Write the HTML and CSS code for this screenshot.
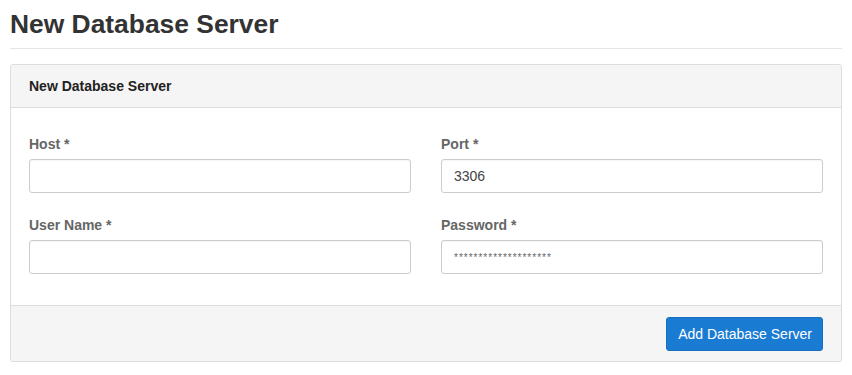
FILE: index.html
```html
<!DOCTYPE html>
<html lang="en">
<head>
    <meta charset="UTF-8">
    <meta name="viewport" content="width=device-width, initial-scale=1.0">
    <title>New Database Server</title>
    <link rel="stylesheet" href="styles.css">
</head>
<body>

<div class="page-header">
    <h1>New Database Server</h1>
</div>

<form class="panel">
    <div class="panel-heading">New Database Server</div>

    <div class="panel-body">
        <div class="form-row">
            <div class="form-group">
                <label for="host">Host *</label>
                <input class="form-control" type="text" id="host" />
            </div>
            <div class="form-group">
                <label for="port">Port *</label>
                <input class="form-control" type="text" id="port" value="3306" />
            </div>
        </div>
        <div class="form-row">
            <div class="form-group">
                <label for="username">User Name *</label>
                <input class="form-control" type="text" id="username" />
            </div>
            <div class="form-group">
                <label for="password">Password *</label>
                <!-- masked value shown as asterisks -->
                <input class="form-control masked" type="text" id="password" value="********************" />
            </div>
        </div>
    </div>

    <div class="panel-footer">
        <button class="btn-primary" type="button">Add Database Server</button>
    </div>
</form>

</body>
</html>
```

FILE: styles.css
```css
* {
    box-sizing: border-box;
}
body {
    margin: 0;
    padding: 0 10px;
    font-family: "Liberation Sans", Arial, sans-serif;
    font-size: 14px;
    color: #333;
    background: #fff;
}
.page-header {
    border-bottom: 1px solid #e5e5e5;
    padding-top: 7px;
    height: 49px;
}
h1 {
    margin: 0;
    font-size: 26.4px;
    line-height: 34px;
    font-weight: bold;
    color: #333;
}
.panel {
    margin-top: 15px;
    border: 1px solid #ddd;
    border-radius: 3px;
    background: #fff;
    box-shadow: 0 1px 1px rgba(0, 0, 0, 0.03);
}
.panel-heading {
    background: #f5f5f5;
    border-bottom: 1px solid #ddd;
    border-radius: 3px 3px 0 0;
    height: 43px;
    padding: 0 18px;
    line-height: 42px;
    font-size: 14px;
    font-weight: bold;
    color: #222;
}
.panel-body {
    padding: 26px 18px 31px 18px;
}
.form-row {
    display: grid;
    grid-template-columns: 1fr 1fr;
    column-gap: 30px;
}
.form-row + .form-row {
    margin-top: 22px;
}
label {
    display: block;
    font-weight: bold;
    color: #666;
    line-height: 20px;
    margin-bottom: 5px;
}
.form-control {
    display: block;
    width: 100%;
    height: 34px;
    padding: 6px 12px;
    border: 1px solid #ccc;
    border-radius: 3px;
    font-family: "Liberation Sans", Arial, sans-serif;
    font-size: 14px;
    color: #444;
    background: #fff;
    box-shadow: inset 0 1px 1px rgba(0, 0, 0, 0.04);
}
.form-control.masked {
    font-size: 10px;
    letter-spacing: 1px;
    color: #666;
}
.panel-footer {
    background: #f5f5f5;
    border-top: 1px solid #ddd;
    border-radius: 0 0 3px 3px;
    padding: 11px 18px 10px 18px;
    display: flex;
    justify-content: flex-end;
}
.btn-primary {
    height: 34px;
    padding: 0 10px 0 11px;
    background-color: #1a7bd3;
    border: 1px solid #176fbf;
    border-radius: 3px;
    color: white;
    font-family: "Liberation Sans", Arial, sans-serif;
    font-size: 14px;
    cursor: pointer;
}
```
